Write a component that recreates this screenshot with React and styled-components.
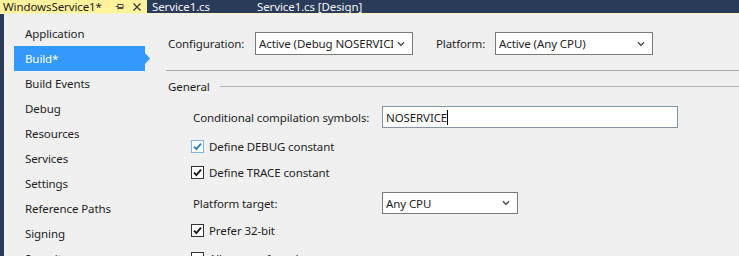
import React from 'react';
import styled, { createGlobalStyle } from 'styled-components';

const GlobalStyle = createGlobalStyle`
  html, body {
    margin: 0;
    padding: 0;
    background: #f0f0f0;
  }
  body {
    font-family: "Noto Sans", "Open Sans", sans-serif;
    font-size: 11.5px;
    letter-spacing: -0.1px;
    color: #1e1e1e;
  }
`;

const Window = styled.div`
  width: 739px;
  height: 256px;
  overflow: hidden;
  display: flex;
  flex-direction: column;
  background: #f0f0f0;
`;

const TabBar = styled.div`
  height: 13px;
  flex: none;
  display: flex;
  align-items: center;
  background: #2a3a59;
  font-size: 11.5px;
  line-height: 13px;
`;

const ActiveTab = styled.div`
  width: 147px;
  height: 13px;
  flex: none;
  box-sizing: border-box;
  padding-left: 3px;
  display: flex;
  align-items: center;
  background: #fff29d;
  color: #1e1e1e;
`;

const TabTitle = styled.span`
  flex: 1;
  white-space: nowrap;
`;

const TabIcons = styled.div`
  display: flex;
  align-items: center;
  gap: 9px;
  padding-right: 6px;
`;

const Tab = styled.div`
  width: ${p => p.$w}px;
  flex: none;
  box-sizing: border-box;
  padding-left: 5px;
  color: #f4f6fa;
  white-space: nowrap;
`;

const TabLine = styled.div`
  height: 1px;
  flex: none;
  background: #fbf3c8;
`;

const Body = styled.div`
  flex: 1;
  display: flex;
  border-left: 4px solid #2a3a59;
`;

const Sidebar = styled.nav`
  width: 152px;
  flex: none;
  padding-top: 7px;
  display: flex;
  flex-direction: column;
`;

const NavItem = styled.div`
  height: 25px;
  flex: none;
  width: 136px;
  margin-left: 10px;
  padding-left: 11px;
  box-sizing: border-box;
  display: flex;
  align-items: center;
  white-space: nowrap;
  color: ${p => (p.$active ? '#ffffff' : '#1e1e1e')};
  background: ${p => (p.$active ? '#3399ff' : 'transparent')};
  clip-path: ${p =>
    p.$active
      ? 'polygon(0 0, 131px 0, 131px 7px, 136px 12.5px, 131px 18px, 131px 100%, 0 100%)'
      : 'none'};
`;

const Content = styled.div`
  flex: 1;
  padding-left: 12px;
  display: flex;
  flex-direction: column;
`;

const TopRow = styled.div`
  margin-top: 18px;
  height: 23px;
  display: flex;
  align-items: center;
`;

const TopLabel = styled.label`
  width: ${p => p.$w}px;
  flex: none;
  white-space: nowrap;
`;

const Select = styled.div`
  width: ${p => p.$w}px;
  height: ${p => p.$h}px;
  flex: none;
  box-sizing: border-box;
  border: 1px solid #7a7a7a;
  background: #ffffff;
  display: flex;
  align-items: center;
  gap: 4px;
  padding: 0 7px 0 3px;
  margin-right: ${p => p.$mr || 0}px;
  white-space: nowrap;
`;

const SelectText = styled.span`
  flex: 1;
  overflow: hidden;
`;

const Divider = styled.div`
  margin-top: 15px;
  margin-left: -2px;
  height: 1px;
  background: #a9a9a9;
`;

const SectionHead = styled.div`
  margin-top: 7px;
  height: 16px;
  display: flex;
  align-items: center;
  gap: 10px;

  &::after {
    content: '';
    flex: 1;
    height: 1px;
    background: #b4b4b4;
  }
`;

const Form = styled.div`
  padding-left: 25px;
  display: flex;
  flex-direction: column;
`;

const Row = styled.div`
  height: 26px;
  flex: none;
  margin-top: ${p => p.$gap}px;
  display: flex;
  align-items: center;
  white-space: nowrap;
`;

const FieldLabel = styled.label`
  width: 189px;
  flex: none;
`;

const TextBox = styled.div`
  width: 296px;
  height: 22px;
  box-sizing: border-box;
  border: 1px solid #8595a8;
  background: #ffffff;
  padding-left: 3px;
  display: flex;
  align-items: center;
`;

const Caret = styled.span`
  width: 1px;
  height: 15px;
  background: #000000;
`;

const Box = styled.span`
  width: 13px;
  height: 13px;
  box-sizing: border-box;
  margin-left: -2px;
  margin-right: 5px;
  flex: none;
  border: 1px solid ${p => (p.$hot ? '#7eb4ea' : '#333333')};
  background: #ffffff;
  display: flex;
  align-items: center;
  justify-content: center;
`;

const Chevron = () => (
  <svg width="8" height="6" viewBox="0 0 8 6">
    <path d="M1 1.2 L4 4.4 L7 1.2" fill="none" stroke="#505050" strokeWidth="1.5" />
  </svg>
);

const Pin = () => (
  <svg width="9" height="9" viewBox="0 0 9 9">
    <path d="M0.5 4.5 H3 M3 1.5 V7.5 M3 2.5 H8 V6.5 H3 M3 5.5 H8" fill="none" stroke="#4a4a4a" strokeWidth="1" />
  </svg>
);

const Close = () => (
  <svg width="8" height="8" viewBox="0 0 8 8">
    <path d="M0.5 0.5 L7.5 7.5 M7.5 0.5 L0.5 7.5" stroke="#3a3a3a" strokeWidth="1.3" />
  </svg>
);

const Check = ({ color }) => (
  <svg width="9" height="9" viewBox="0 0 9 9">
    <path d="M1 4.6 L3.4 7 L8 1.6" fill="none" stroke={color} strokeWidth="1.9" />
  </svg>
);

const CheckRow = ({ gap, checked, hot, children }) => (
  <Row $gap={gap}>
    <Box $hot={hot}>{checked && <Check color={hot ? '#2f7fbf' : '#1a1a1a'} />}</Box>
    {children}
  </Row>
);

const navItems = [
  'Application',
  'Build*',
  'Build Events',
  'Debug',
  'Resources',
  'Services',
  'Settings',
  'Reference Paths',
  'Signing',
  'Security',
];

export default function App() {
  return (
    <>
      <GlobalStyle />
      <Window>
        <TabBar>
          <ActiveTab>
            <TabTitle>WindowsService1*</TabTitle>
            <TabIcons>
              <Pin />
              <Close />
            </TabIcons>
          </ActiveTab>
          <Tab $w={105}>Service1.cs</Tab>
          <Tab $w={200}>Service1.cs [Design]</Tab>
        </TabBar>
        <TabLine />
        <Body>
          <Sidebar>
            {navItems.map(item => (
              <NavItem key={item} $active={item === 'Build*'}>
                {item}
              </NavItem>
            ))}
          </Sidebar>
          <Content>
            <TopRow>
              <TopLabel $w={87}>Configuration:</TopLabel>
              <Select $w={158} $h={23} $mr={23}>
                <SelectText>Active (Debug NOSERVICI</SelectText>
                <Chevron />
              </Select>
              <TopLabel $w={59}>Platform:</TopLabel>
              <Select $w={158} $h={23}>
                <SelectText>Active (Any CPU)</SelectText>
                <Chevron />
              </Select>
            </TopRow>
            <Divider />
            <SectionHead>General</SectionHead>
            <Form>
              <Row $gap={10}>
                <FieldLabel>Conditional compilation symbols:</FieldLabel>
                <TextBox>
                  NOSERVICE
                  <Caret />
                </TextBox>
              </Row>
              <CheckRow gap={3} checked hot>Define DEBUG constant</CheckRow>
              <CheckRow gap={0} checked>Define TRACE constant</CheckRow>
              <Row $gap={5}>
                <FieldLabel>Platform target:</FieldLabel>
                <Select $w={136} $h={22}>
                  <SelectText>Any CPU</SelectText>
                  <Chevron />
                </Select>
              </Row>
              <CheckRow gap={1} checked>Prefer 32-bit</CheckRow>
              <CheckRow gap={2}>Allow unsafe code</CheckRow>
            </Form>
          </Content>
        </Body>
      </Window>
    </>
  );
}
